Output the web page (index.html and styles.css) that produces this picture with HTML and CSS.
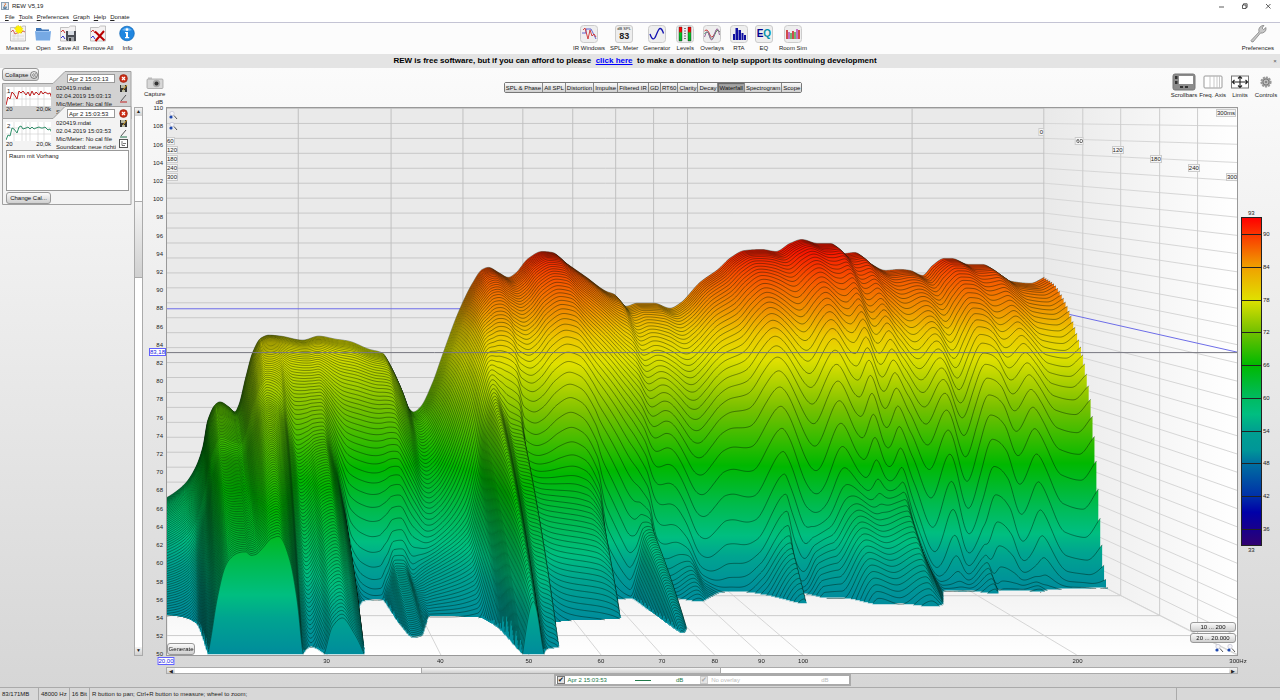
FILE: index.html
```
<!DOCTYPE html>
<html lang="en">
<head>
	<meta charset="utf-8">
	<title>REW V5,19</title>
	<link rel="stylesheet" href="styles.css">
</head>
<body>
	<div class="titlebar">
		<svg class="logo" viewBox="0 0 8 8"><rect x=".5" y=".5" width="7" height="7" fill="#dfe8f0" stroke="#8ba0b4"/><path d="M4 1.2q1.2 1-.2 2t0 1.2" fill="none" stroke="#e06a20"/><path d="M2 5.2h4M2.4 6.4h3" stroke="#4a7090"/></svg>
		<span class="name">REW V5,19</span>
		<svg class="winbtns" viewBox="0 0 56 10" fill="none" stroke="#333" stroke-width=".8"><path d="M2 6h5M49 3l4.500 4.500M53.500 3L49 7.500"/><path d="M25.500 4h3.500v3.500h-3.500zM26.500 4v-1.200h3.600v3.600h-1"/></svg>
	</div>
	<nav class="menu">
		<a href="#"><u>F</u>ile</a><a href="#"><u>T</u>ools</a><a href="#"><u>P</u>references</a><a href="#"><u>G</u>raph</a><a href="#"><u>H</u>elp</a><a href="#"><u>D</u>onate</a>
	</nav>

	<div class="toolbar">
		<div class="tools left">
			<button class="tool"><svg viewBox="0 0 18 18"><path d="M1.500 2.500h11l1-1.500h3v15h-15z" fill="#f4f2f2" stroke="#aaa" stroke-width=".7"/><path d="M3 11h12M3 14h12M5 8v7M9 8v7" stroke="#ccc" stroke-width=".6"/><path d="M2 7l2-2 2 4 2-1 3-1M12 8l2-2 2 1" fill="none" stroke="#c33" stroke-width=".8"/><path d="M9 0l1.200 1.600L12 1l.2 1.900 1.800.3-1 1.500 1.200 1.300-1.800.6-.2 1.800-1.700-.8-1.500 1.100-.7-1.700-1.900-.2.900-1.600L5.200 3.300l1.900-.4L7.200 1l1.500.6z" fill="#fff200" stroke="#e8cf00" stroke-width=".4"/></svg>Measure</button>
			<button class="tool"><svg viewBox="0 0 18 18"><path d="M2 4V3h5l1 1.500h7V7H2z" fill="#3f76b8"/><path d="M1 6h16l-1 9.500H2z" fill="#76a9e4"/><path d="M1.500 6.500h15" stroke="#9dc4f2"/></svg>Open</button>
			<button class="tool"><svg viewBox="0 0 18 18"><path d="M1.500 2.500h8l2-1.500h5v15h-15z" fill="#f4f2f2" stroke="#aaa" stroke-width=".7"/><path d="M2 7l2-2 2 3" fill="none" stroke="#c33"/><path d="M2 13l2-2 2 3" fill="none" stroke="#33c"/><path d="M7 6h10v10H8l-1-1z" fill="#4a4d54"/><path d="M9 6h6v4H9z" fill="#d8dde4"/><path d="M9 12h6v4H9z" fill="#9ca0a6"/><path d="M10 13h2v3h-2z" fill="#333"/></svg>Save All</button>
			<button class="tool"><svg viewBox="0 0 18 18"><path d="M1.500 2.500h8l2-1.500h5v15h-15z" fill="#f4f2f2" stroke="#aaa" stroke-width=".7"/><path d="M2 7l2-2 2 3" fill="none" stroke="#c33"/><path d="M2 13l2-2 2 3" fill="none" stroke="#33c"/><path d="M6 6.500l9.500 9M15 6L6.500 16" stroke="#b80000" stroke-width="2"/></svg>Remove All</button>
			<button class="tool"><svg viewBox="0 0 18 18"><circle cx="9" cy="8.500" r="7.300" fill="#1f86e0" stroke="#0e64b4" stroke-width=".7"/><path d="M4 5q5-5 10 0-5 2-10 0z" fill="#66b3f4"/><circle cx="9" cy="4.600" r="1.300" fill="#fff"/><path d="M7 7h3v5h1.200v1.200H7V12h1V8.200H7z" fill="#fff"/></svg>Info</button>
		</div>
		<div class="tools mid">
			<button class="tool"><svg viewBox="0 0 18 18"><rect class="ico" x=".5" y=".5" width="17" height="17" rx="3"/><path d="M2 8h4V4h5l5 10" fill="none" stroke="#4040c0" stroke-width=".8"/><path d="M3 5l2-2 3 11 2-9 2 6 2-2 2 3" fill="none" stroke="#d03030" stroke-width=".9"/></svg>IR Windows</button>
			<button class="tool"><span class="spl"><small>dB SPL</small><b>83</b></span>SPL Meter</button>
			<button class="tool"><svg viewBox="0 0 18 18"><rect class="ico" x=".5" y=".5" width="17" height="17" rx="3"/><path d="M2 9q3 9 6 1.500t4-7q2 0 3.500 5" fill="none" stroke="#1010b0" stroke-width="1.300"/></svg>Generator</button>
			<button class="tool"><svg viewBox="0 0 18 18"><defs><linearGradient id="lv" x1="0" y1="0" x2="0" y2="1"><stop offset="0" stop-color="#f00"/><stop offset=".3" stop-color="#f00"/><stop offset=".45" stop-color="#0c2"/><stop offset="1" stop-color="#0a2"/></linearGradient></defs><rect class="ico" x=".5" y=".5" width="17" height="17" rx="3"/><path fill="url(#lv)" stroke="#222" stroke-width=".4" d="M3 2h3v14H3zM12 2h3v14h-3z"/><path d="M9 3v12" stroke="#777" stroke-dasharray="1 1.500" stroke-width="2"/></svg>Levels</button>
			<button class="tool"><svg viewBox="0 0 18 18" fill="none"><rect class="ico" x=".5" y=".5" width="17" height="17" rx="3"/><path d="M1.500 6q3-3 5 3t5 0 5-2" stroke="#c33"/><path d="M1.500 9q3-5 5 2t5-1 5-3" stroke="#396"/><path d="M1.500 12q3-10 5-1t5-2 5 1" stroke="#969"/></svg>Overlays</button>
			<button class="tool"><svg viewBox="0 0 18 18"><rect class="ico" x=".5" y=".5" width="17" height="17" rx="3"/><path fill="#1010a0" d="M3 9h2v6H3zM5.500 3H8v12H5.500zM8.500 5H11v10H8.500zM11.500 8h2v7h-2zM14 10h2v5h-2z"/></svg>RTA</button>
			<button class="tool"><span class="eq"><b>E<i>Q</i></b></span>EQ</button>
			<button class="tool"><svg viewBox="0 0 18 18"><rect class="ico" x=".5" y=".5" width="17" height="17" rx="3"/><path d="M3 5v9M9 6v8M15 5v9" stroke="#c22" stroke-width="1.600"/><path d="M5 7v7M13 4v10" stroke="#a3a" stroke-width="1.300"/><path d="M7 8v6M11 7v7" stroke="#393" stroke-width="1.300"/></svg>Room Sim</button>
		</div>
		<div class="tools right">
			<button class="tool"><svg viewBox="0 0 18 18"><path d="M2 15.500l8-8.500q-1-3 1-5t4-1.500l-2 2.500 1.500 1.500L17 2.500q.5 3-1.500 4.500t-4 1L4 17q-2 0-2-1.500z" fill="#c8c8c8" stroke="#777" stroke-width=".7"/></svg>Preferences</button>
		</div>
	</div>

	<div class="banner">
		<p>REW is free software, but if you can afford to please &nbsp;<a href="#">click here</a>&nbsp; to make a donation to help support its continuing development</p>
		<button class="close">×</button>
	</div>

	<div class="main">
		<aside class="side">
			<button class="btn collapse">Collapse <svg viewBox="0 0 8 8" fill="none" stroke="#555" stroke-width=".7"><circle cx="4" cy="4" r="3.500"/><path d="M4 2.200L2.400 4 4 5.800M6 2.200L4.400 4 6 5.800"/></svg></button>

			<section class="card dim">
				<svg class="frame" viewBox="0 0 130 50" fill="#d2d2d2" stroke="#a0a0a0"><path d="M.5 48V12.500H51L63 .5h66V48z"/></svg>
				<div class="row">
					<div class="thumb">
						<svg viewBox="0 0 45 25" fill="none"><path class="grid" d="M8 0v19M16 0v19M20 0v19M24 0v19M32 0v19M38 0v19M0 6h45M0 12h45"/><path d="M0 18l2-8 2 2 2-7 2 2 3 5 2-8 2 2 2-2 3 4 2-3 2 4 2-5 2 4 2-3 3 3 2-4 2 3 2-2 3 2 2-1 2 6" stroke="#c02020" stroke-width="1"/></svg>
						<b>1</b><span class="lo">20</span><span class="hi">20,0k</span>
					</div>
					<div class="data">
						<input type="text" aria-label="Name" value="Apr 2 15:03:13">
						<p>020419.mdat</p><p>02.04.2019 15:03:13</p><p>Mic/Meter: No cal file</p><p>Soundcard: neue richtig</p>
					</div>
					<div class="acts">
						<button aria-label="Remove"><svg viewBox="0 0 9 9"><circle cx="4.500" cy="4.500" r="3.900" fill="#d03018" stroke="#8c1c0c" stroke-width=".6"/><path d="M3 3l3 3M6 3L3 6" stroke="#fff" stroke-width="1.200"/></svg></button>
						<button aria-label="Save"><svg viewBox="0 0 9 9"><path d="M1 1h7v7H1z" fill="#333"/><path d="M2 1h4v3H2zM3 6h3v2H3z" fill="#b9b9a0"/><path d="M4 6l4-5" stroke="#d8a020"/></svg></button>
						<button aria-label="Colour"><svg viewBox="0 0 9 9"><path d="M2 7l5-6" stroke="#555"/><path d="M1 8h7" stroke="#c02020"/></svg></button>
					</div>
				</div>
			</section>

			<section class="card front">
				<svg class="frame" viewBox="0 0 130 100" fill="#f3f3f3" stroke="#a0a0a0"><path d="M.5 98.500V12.500H51L63 .5h66v98z"/></svg>
				<div class="row">
					<div class="thumb">
						<svg viewBox="0 0 45 25" fill="none"><path class="grid" d="M8 0v19M16 0v19M20 0v19M24 0v19M32 0v19M38 0v19M0 6h45M0 12h45"/><path d="M0 18l2-5 2 1 2-8 2 1 3 4 2-6 2-1 2 3 3-1 2-1 2 2 2-2 2 2 2-1 3-1 2 1 2 0 2-1 3 3 2-1 2 4" stroke="#30906a" stroke-width="1"/></svg>
						<b>2</b><span class="lo">20</span><span class="hi">20,0k</span>
					</div>
					<div class="data">
						<input type="text" aria-label="Name" value="Apr 2 15:03:53">
						<p>020419.mdat</p><p>02.04.2019 15:03:53</p><p>Mic/Meter: No cal file</p><p>Soundcard: neue richtig</p>
					</div>
					<div class="acts">
						<button aria-label="Remove"><svg viewBox="0 0 9 9"><circle cx="4.500" cy="4.500" r="3.900" fill="#d03018" stroke="#8c1c0c" stroke-width=".6"/><path d="M3 3l3 3M6 3L3 6" stroke="#fff" stroke-width="1.200"/></svg></button>
						<button aria-label="Save"><svg viewBox="0 0 9 9"><path d="M1 1h7v7H1z" fill="#333"/><path d="M2 1h4v3H2zM3 6h3v2H3z" fill="#b9b9a0"/><path d="M4 6l4-5" stroke="#d8a020"/></svg></button>
						<button aria-label="Colour"><svg viewBox="0 0 9 9"><path d="M2 7l5-6" stroke="#555"/><path d="M1 8h7" stroke="#20704a"/></svg></button>
						<button aria-label="Notes"><svg viewBox="0 0 9 9" fill="none" stroke="#555"><rect x=".5" y=".5" width="8" height="8" fill="#fff"/><path d="M3 2v4.500h3M4 4.500h3" stroke-width=".8"/></svg></button>
					</div>
				</div>
				<textarea aria-label="Notes">Raum mit Vorhang</textarea>
				<button class="btn cal">Change Cal...</button>
			</section>
		</aside>
		<div class="vscroll"><i class="up"></i><i class="thumbv"></i><i class="down"></i></div>

		<div class="graph">
			<header class="ghead">
				<button class="tool capture"><svg viewBox="0 0 18 13"><rect x="1" y="2.500" width="16" height="9.500" rx="1" fill="#d8d8d8" stroke="#999" stroke-width=".7"/><path d="M2 2.500V1h4v1.500" fill="#bbb"/><circle cx="10.500" cy="7" r="3.700" fill="#aaa"/><circle cx="10.500" cy="7" r="2" fill="#333"/></svg>Capture</button>
				<div class="tabs">
					<button>SPL &amp; Phase</button><button>All SPL</button><button>Distortion</button><button>Impulse</button><button>Filtered IR</button><button>GD</button><button>RT60</button><button>Clarity</button><button>Decay</button><button class="on">Waterfall</button><button>Spectrogram</button><button>Scope</button>
				</div>
				<div class="gtools">
					<button class="tool"><svg viewBox="0 0 24 18"><rect x="1" y="1" width="22" height="16" rx="2" fill="#8c8c8c" stroke="#777"/><path d="M7 3h14v8H7z" fill="#fff"/><path d="M3 3h2.500v3H3zM3 8h2.500v3H3zM8 13h3v2H8zM13 13h3v2h-3z" fill="#333"/></svg>Scrollbars</button>
					<button class="tool"><svg viewBox="0 0 24 18"><rect x="3" y="3" width="18" height="12" rx="1" fill="#fff" stroke="#999"/><path d="M9 3v12M13 3v12M16 3v12M18.500 3v12" stroke="#bbb" stroke-width=".8"/></svg>Freq. Axis</button>
					<button class="tool"><svg viewBox="0 0 24 18"><rect x="3.500" y="3" width="17" height="12" fill="#fff" stroke="#777"/><path d="M4 9h16M12 3.500v11M6.500 7l-2 2 2 2M17.500 7l2 2-2 2M10 5.500l2-2 2 2M10 12.500l2 2 2-2" fill="none" stroke="#222" stroke-width="1.100"/></svg>Limits</button>
					<button class="tool"><svg viewBox="0 0 24 18"><circle cx="12" cy="9" r="4.600" fill="#aaa" stroke="#999" stroke-width="2" stroke-dasharray="2 1"/><circle cx="12" cy="9" r="3" fill="#bbb" stroke="#666" stroke-width=".7"/><circle cx="12" cy="9" r="1" fill="#777"/></svg>Controls</button>
				</div>
			</header>

			<div class="yaxis" id="yaxis"><span class="unit">dB</span><span class="mark">83,18</span></div>
			<div class="plot" id="plot">
				<canvas id="waterfall"></canvas>
				<div class="zooms tl">
					<svg viewBox="0 0 9 9"><circle cx="3" cy="2.500" r="2.200" fill="#f4f4f8" stroke="#bbc" stroke-width=".6"/><path d="M5 4.500L8 8" stroke="#555"/><circle cx="2" cy="6" r="1.600" fill="#1c48b0"/></svg>
					<svg viewBox="0 0 9 9"><circle cx="3" cy="2.500" r="2.200" fill="#f4f4f8" stroke="#bbc" stroke-width=".6"/><path d="M5 4.500L8 8" stroke="#555"/><circle cx="2" cy="6" r="1.600" fill="#1c48b0"/></svg>
				</div>
				<span class="tag ms">300ms</span>
				<button class="btn generate">Generate</button>
				<div class="ranges">
					<button class="btn">10 ... 200</button>
					<button class="btn">20 ... 20.000</button>
					<div class="zooms">
						<svg viewBox="0 0 9 9"><circle cx="3" cy="2.500" r="2.200" fill="#f4f4f8" stroke="#bbc" stroke-width=".6"/><path d="M5 4.500L8 8" stroke="#555"/><circle cx="2" cy="6" r="1.600" fill="#1c48b0"/></svg>
						<svg viewBox="0 0 9 9"><circle cx="3" cy="2.500" r="2.200" fill="#f4f4f8" stroke="#bbc" stroke-width=".6"/><path d="M5 4.500L8 8" stroke="#555"/><circle cx="2" cy="6" r="1.600" fill="#1c48b0"/></svg>
					</div>
				</div>
			</div>
			<div class="scale"><div class="bar" id="bar"><span class="top">93</span><span class="bot">33</span></div></div>

			<div class="xaxis" id="xaxis"><span class="mark">20,00</span></div>
			<div class="hscroll"><i class="lt"></i><i class="thumbh"></i><i class="rt"></i></div>
			<div class="legend">
				<label class="tr"><input type="checkbox" checked>Apr 2 15:03:53</label><i class="line"></i><span class="tr">dB</span>
				<label class="off"><input type="checkbox" checked disabled>No overlay</label><span class="off last">dB</span>
			</div>
		</div>
	</div>

	<footer class="status"><span>83/171MB</span><span>48000 Hz</span><span>16 Bit</span><span class="hint">R button to pan; Ctrl+R button to measure; wheel to zoom;</span><span class="end"></span></footer>

	<script src="waterfall.js"></script>
</body>
</html>
```
FILE: styles.css
```
*{
	box-sizing: border-box;
	margin: 0;
	padding: 0;
}
body{
	display: flex;
	flex-direction: column;
	min-height: 100vh;
	font: 6px/8px "Liberation Sans", Arial, sans-serif;
	color: #222;
	background: #fff;
}
button, input, textarea{
	font: inherit;
	color: inherit;
}
button{
	border: 0;
	background: none;
	white-space: nowrap;
}
svg{
	display: block;
}

/* title and menu */
.titlebar{
	display: flex;
	align-items: center;
	height: 12px;
	padding: 0 7px 0 1px;
}
.logo{
	width: 8px;
	height: 8px;
	margin-right: 3px;
}
.winbtns{
	width: 56px;
	height: 10px;
	margin-left: auto;
}
.menu{
	display: flex;
	gap: 4px;
	height: 11px;
	padding: 1px 5px;
	border-bottom: 1px solid #c4c4d4;
}
.menu a{
	color: inherit;
	text-decoration: none;
}

/* toolbar */
.toolbar{
	display: grid;
	grid-template-columns: 1fr auto 1fr;
	height: 31px;
	padding: 2px 6px 0;
	background: #fcfcfc;
}
.tools{
	display: flex;
	align-items: flex-start;
}
.tools.left{
	gap: 4px;
}
.tools.mid{
	gap: 5px;
	padding-left: 100px;
}
.tools.right{
	justify-content: flex-end;
}
.tool{
	display: flex;
	flex-direction: column;
	align-items: center;
	min-width: 20px;
}
.tools .tool svg, .spl, .eq{
	width: 18px;
	height: 18px;
	margin-bottom: 1px;
}
.ico{
	fill: #eee;
	stroke: #ccc;
}
.spl, .eq{
	display: block;
	border: 1px solid #ccc;
	border-radius: 3px;
	background: #eee;
}
.spl small{
	display: block;
	font-size: 4px;
	line-height: 6px;
}
.spl b{
	display: block;
	font-size: 9px;
	line-height: 9px;
}
.eq b{
	display: block;
	font-size: 10px;
	line-height: 16px;
	color: #000090;
}
.eq i{
	font-style: normal;
	color: #0090a8;
}
.banner{
	display: flex;
	align-items: center;
	height: 14px;
	background: #e4e4e4;
}
.banner p{
	flex: 1;
	font-size: 8px;
	line-height: 12px;
	font-weight: bold;
	text-align: center;
	color: #000;
}
.banner a{
	color: #00f;
}
.close{
	width: 10px;
	color: #555;
}

/* measurements panel */
.main{
	display: flex;
	flex: 1;
	background: linear-gradient(#fbfbfb, #d6d6d6);
}
.side{
	width: 134px;
	padding-left: 2px;
}
.btn{
	display: block;
	border: 1px solid #999;
	border-radius: 3px;
	background: linear-gradient(#fafafa, #cfcfcf);
	color: #111;
}
.collapse{
	position: relative;
	z-index: 1;
	display: flex;
	align-items: center;
	gap: 2px;
	width: 37px;
	height: 13px;
	padding: 0 2px;
}
.collapse svg{
	flex: 0 0 8px;
	height: 8px;
}
.card{
	position: relative;
	width: 130px;
}
.dim{
	height: 35px;
	margin-top: -10px;
}
.front{
	height: 100px;
}
.frame{
	position: absolute;
	inset: 0;
	width: 130px;
	height: auto;
}
.row{
	position: relative;
	display: flex;
	height: 44px;
}
.dim .row{
	height: 47px;
	overflow: hidden;
}
.thumb{
	position: relative;
	width: 45px;
	height: 25px;
	margin: 16px 5px 0 4px;
}
.thumb svg{
	width: 45px;
	height: 25px;
	background: linear-gradient(#fff 76%, transparent 76%);
}
.grid{
	stroke: #ccc;
	stroke-width: .6;
}
.thumb b, .thumb span{
	position: absolute;
	font-weight: normal;
}
.thumb b{
	left: 1px;
	top: 0;
	line-height: 8px;
}
.thumb .lo, .thumb .hi{
	bottom: -1px;
	line-height: 7px;
}
.thumb .lo{
	left: 0;
}
.thumb .hi{
	right: 0;
}
.data{
	width: 60px;
	padding-top: 3px;
	overflow: hidden;
	white-space: nowrap;
}
.data input{
	display: block;
	width: 48px;
	height: 9px;
	margin: 0 0 1px 11px;
	padding: 0 1px;
	border: 1px solid #999;
	background: #fff;
}
.data p{
	line-height: 8px;
}
.acts{
	padding: 3px 0 0 3px;
}
.acts button{
	display: block;
	margin-bottom: 1px;
}
.acts svg{
	width: 9px;
	height: 9px;
}
.front textarea{
	position: relative;
	display: block;
	width: 123px;
	height: 41px;
	margin-left: 4px;
	padding: 1px 2px;
	border: 1px solid #999;
	background: #fff;
	resize: none;
}
.cal{
	position: relative;
	width: 45px;
	height: 12px;
	margin: 1px 4px;
}

/* scroll bars */
.vscroll{
	display: flex;
	flex-direction: column;
	width: 9px;
	margin: 39px 0 31px;
	border: 1px solid #aaa;
	background: #fff;
}
.vscroll i, .hscroll i{
	background: linear-gradient(#f4f4f4, #d0d0d0);
}
.up, .down, .lt, .rt{
	flex: 0 0 8px;
	font-size: 5px;
	font-style: normal;
	line-height: 7px;
	text-align: center;
}
.up::before{
	content: "▲";
}
.down::before{
	content: "▼";
}
.lt::before{
	content: "◀";
}
.rt::before{
	content: "▶";
}
.thumbv{
	flex: 0 0 14%;
	margin: 85px 0 auto;
	border: 1px solid #aaa;
	border-width: 1px 0;
}
.hscroll{
	grid-column: 2;
	display: flex;
	height: 7px;
	margin-top: 1px;
	border: 1px solid #aaa;
	background: #fff;
}
.thumbh{
	flex: 0 0 28%;
	margin: 0 auto 0 23%;
	border: 1px solid #aaa;
	border-width: 0 1px;
}

/* graph */
.graph{
	display: grid;
	flex: 1;
	grid-template-columns: 23px 1fr 42px;
	grid-template-rows: 39px 1fr 10px 8px 13px;
	min-width: 0;
}
.ghead{
	grid-column: 1 / 4;
	display: grid;
	grid-template-columns: 1fr auto 1fr;
}
.capture{
	justify-self: start;
	margin: 8px 0 0 1px;
}
.capture svg{
	width: 18px;
	height: 14px;
}
.tabs{
	display: flex;
	align-self: start;
	height: 11px;
	margin: 14px 117px 0 0;
	border: 1px solid #777;
	border-radius: 2px;
}
.tabs button{
	padding: 0 1px;
	border-right: 1px solid #888;
	background: linear-gradient(#fafafa, #d0d0d0);
	color: #111;
}
.tabs button:last-child{
	border-right: 0;
}
.tabs .on{
	background: #a4a4a4;
	box-shadow: inset 1px 1px 1px #666;
}
.gtools{
	display: flex;
	justify-content: flex-end;
	gap: 2px;
	padding: 5px 2px 0 0;
}
.gtools svg{
	width: 24px;
	height: 18px;
}
.yaxis, .xaxis{
	position: relative;
}
.yaxis span{
	position: absolute;
	right: 3px;
	margin-top: -4px;
}
.yaxis .unit{
	top: -5px;
}
.mark{
	border: 1px solid #6060ff;
	color: #2020e0;
	background: #fff;
}
.yaxis .mark{
	top: 44.700%;
	right: 0;
	line-height: 6px;
}
.plot{
	position: relative;
	min-height: 200px;
	overflow: hidden;
	border: 1px solid #999;
	background: #fff;
}
.plot canvas{
	position: absolute;
	inset: 0;
	width: 100%;
	height: 100%;
}
.tag{
	position: absolute;
	border: 1px solid #ccc;
	background: #f6f6f6;
	line-height: 6px;
}
.plot .ms{
	top: 1px;
	right: 1px;
}
.tag.time{
	margin: -4px -1px 0 0;
	transform: translateX(-50%);
}
.tag.ltime{
	left: -1px;
	margin-top: -4px;
}
.zooms svg{
	width: 9px;
	height: 9px;
}
.zooms.tl{
	position: absolute;
	left: 2px;
	top: 3px;
	display: grid;
	gap: 2px;
}
.generate{
	position: absolute;
	left: 0;
	bottom: 0;
	width: 28px;
	height: 12px;
}
.ranges{
	position: absolute;
	right: 1px;
	bottom: 0;
	width: 46px;
}
.ranges .btn{
	width: 46px;
	height: 10px;
	margin-bottom: 1px;
	line-height: 8px;
}
.ranges .zooms{
	display: flex;
	justify-content: flex-end;
	gap: 3px;
	height: 11px;
}
.scale{
	position: relative;
}
.bar{
	position: absolute;
	left: 3px;
	top: 20%;
	width: 21px;
	height: 60%;
	border: 1px solid #222;
	background: linear-gradient(#f00, #f0a000 15%, #e0e000 25%, #70c000 35%, #00b900 45%, #00bb60 55%, #00be80 60%, #00a090 65%, #009698 71%, #0070a0 75%, #0030a8 85%, #0000a8 90%, #300070);
}
.bar span{
	position: absolute;
}
.bar .top{
	top: -9px;
	left: 6px;
}
.bar .bot{
	bottom: -9px;
	left: 6px;
}
.bar .tick{
	left: 0;
	width: 100%;
	margin-top: -4px;
	padding-left: 21px;
	background: linear-gradient(#222, #222) 0 4px / 19px 1px no-repeat;
}
.xaxis{
	grid-column: 2;
}
.xaxis span{
	position: absolute;
	top: 1px;
	transform: translateX(-50%);
}
.xaxis .mark{
	left: 0;
	line-height: 6px;
}
.legend{
	grid-column: 2;
	justify-self: center;
	display: flex;
	align-items: center;
	width: 297px;
	height: 12px;
	padding: 0 20px 0 1px;
	border: 2px solid #aaa;
	background: #fff;
}
.legend label{
	display: flex;
	align-items: center;
	gap: 3px;
}
.legend input{
	appearance: none;
	width: 8px;
	height: 8px;
	border: 1px solid #777;
	background: #e4e4e4;
}
.legend input::before{
	content: "✔";
	display: block;
	font-size: 7px;
	line-height: 6px;
	color: #111;
}
.legend input:disabled::before{
	color: #aaa;
}
.tr{
	color: #207848;
}
.line{
	width: 16px;
	height: 1px;
	margin: 0 25px 0 28px;
	background: #207848;
}
.legend .off{
	margin-left: 17px;
	color: #bbb;
}
.legend .off input{
	border-color: #ccc;
}
.legend .last{
	margin-left: auto;
}

/* status bar */
.status{
	display: flex;
	height: 13px;
	border-top: 1px solid #aaa;
	background: #d8d8d8;
	line-height: 13px;
}
.status span{
	padding: 0 2px;
	border-right: 1px solid #aaa;
	white-space: nowrap;
}
.status span:first-child{
	width: 39px;
}
.status .hint{
	flex: 1;
}
.status .end{
	width: 103px;
	border: 0;
}
```
FILE: waterfall.js
```
// plot area in drawing units
var X0 = 166, X1 = 1238, Y0 = 107, Y1 = 656;
var XB = 1045;          // right end of the back wall
var SLICES = 100;

// [x on back wall, y of first slice]
var top0 = [[166,498],[175,492],[185,483],[195,467],[202,447],[207,420],[215,404],[219,402],[228,407],[234,412],[238,405],[245,377],[252,352],[260,338],[268,335],[280,336],[302,340],[318,336],[335,339],[348,341],[368,349],[382,353],[388,362],[398,383],[408,408],[413,412],[420,407],[432,383],[442,355],[458,312],[472,283],[482,269],[488,267],[498,272],[508,277],[515,273],[528,258],[542,251],[552,252],[565,262],[585,276],[606,291],[614,294],[626,306],[637,303],[654,303],[670,308],[680,303],[700,282],[718,269],[731,257],[745,250],[762,249],[776,251],[790,243],[802,239],[818,243],[831,243],[845,253],[855,252],[869,262],[886,270],[900,269],[910,270],[923,275],[933,265],[945,258],[952,258],[969,264],[983,264],[997,272],[1012,281],[1031,283],[1045,277]];

// [x, tail level over 50 dB, time at which the tail reaches 50 dB]
var tail = [[166,8,.61],[175,9,.62],[183,11,.64],[192,14,.7],[200,16,1.02],[207,19,1.5],[214,20,1.96],[230,19,2.45],[245,24,2],[253,27,1.9],[259,28,1.85],[267,28,1.58],[273,28,1.26],[278,27,1],[286,25,.93],[295,25,1],[302,25,1.14],[310,25,1.19],[320,21,1.12],[328,15,1],[336,9,.58],[345,7,.46],[362,3,.42],[368,4,.7],[374,7,.84],[382,7,.82],[390,5,.72],[398,9,.62],[415,13,.62],[440,19,.63],[452,25,.74],[458,28,1],[467,31,1.23],[476,30,1],[482,29,.95],[492,29,.93],[498,28,.7],[520,29,.66],[550,28,.65],[564,23,.64],[573,8,.45],[590,5,.42],[598,8,.6],[606,12,.79],[614,13,.74],[622,7,.5],[632,9,.44],[650,12,.47],[665,6,.42],[690,4,.35],[718,15,.4],[744,17,.49],[752,5,.38],[770,18,.43],[785,22,.43],[810,24,.5],[830,22,.49],[855,22,.52],[866,14,.5],[874,10,.45],[890,6,.36],[912,6,.36],[932,14,.39],[942,5,.34],[960,5,.35],[976,7,.37],[990,4,.33],[1020,4,.33],[1045,3,.31]];

// [x, how much the direct part falls, its speed]
var fall = [[166,.9,.68],[230,.8,.68],[300,.9,.68],[350,1.1,.68],[385,.95,.68],[420,1.1,.68],[470,.85,.7],[500,1,.72],[545,.85,.74],[600,1,.78],[621,1.15,.8],[640,1,.84],[663,1.2,.86],[690,1,.89],[716,1.05,.91],[745,.85,.93],[778,1.22,.94],[800,.95,.95],[822,1.2,.95],[833,.97,.96],[847,1.18,.96],[858,1,.96],[870,1.1,.96],[887,1.24,.97],[905,.98,.97],[923,1.3,.97],[945,.92,.98],[958,.97,.98],[971,1.14,.98],[988,.92,.99],[1012,1.06,1],[1030,1.08,1],[1045,1,1]];

// level drop of the direct part over time
var gate = [[0,0],[.05,.6],[.11,2.7],[.16,5.7],[.197,8.7],[.233,13.2],[.26,19],[.31,38],[.36,60],[1.5,200]];

// monotone cubic through the points
function curve(pts, k){
	var n = pts.length, d = [], m = [];
	for(var i=0;i<n-1;i++){
		d[i] = (pts[i+1][k]-pts[i][k])/(pts[i+1][0]-pts[i][0]);
	}
	m[0] = d[0];
	m[n-1] = d[n-2];
	for(i=1;i<n-1;i++){
		m[i] = d[i-1]*d[i]<=0 ? 0 : 2*d[i-1]*d[i]/(d[i-1]+d[i]);
	}
	return function(x){
		var i = 0;
		while(i<n-2 && x>pts[i+1][0]) i++;
		var h = pts[i+1][0]-pts[i][0], t = (x-pts[i][0])/h, t2 = t*t, t3 = t2*t;
		return (2*t3-3*t2+1)*pts[i][k]+(t3-2*t2+t)*h*m[i]+(3*t2-2*t3)*pts[i+1][k]+(t3-t2)*h*m[i+1];
	};
}

// level and time to screen
function sy(db, t){
	return 308+44*t+(83.18-db)*(7.5+1.64*t);
}
function sx(x, t){
	return X0+(x-X0)*(1+.2196*t);
}
function mix(a, b){
	return 10*Math.log10(Math.pow(10,a/10)+Math.pow(10,b/10));
}

var colors = [[96,"#e00000"],[91,"#f81400"],[88,"#f85000"],[84,"#f09000"],[81,"#ecc800"],[78,"#e0e000"],[72,"#78c000"],[65,"#00b800"],[60,"#00bb50"],[56.5,"#00be80"],[54,"#00a490"],[50,"#008c9c"]];
var freqs = [20,30,40,50,60,70,80,90,100,200,300];
function fpos(f){
	return Math.log(f/20)/Math.log(15);
}

function line(c, x1, y1, x2, y2){
	c.beginPath();
	c.moveTo(x1,y1);
	c.lineTo(x2,y2);
	c.stroke();
}
function area(c, fill, pts){
	c.fillStyle = fill;
	c.beginPath();
	pts.forEach(function(p){ c.lineTo(p[0],p[1]); });
	c.fill();
}

function drawRoom(c){
	var g;
	area(c, "#eaeaea", [[X0,Y0],[XB,Y0],[XB,557],[X0,557]]);
	g = c.createLinearGradient(XB,0,X1,0);
	g.addColorStop(0,"#e9e9e9");
	g.addColorStop(1,"#ffffff");
	area(c, g, [[XB,Y0],[X1,Y0],[X1,Y1],[XB,557]]);
	g = c.createLinearGradient(0,557,0,Y1);
	g.addColorStop(0,"#ececec");
	g.addColorStop(1,"#ffffff");
	area(c, g, [[X0,557],[XB,557],[X1,Y1],[X0,Y1]]);

	c.lineWidth = 1;
	for(var db=50;db<=110;db+=2){
		var y = Math.round(sy(db,0))+.5;
		c.strokeStyle = "#c8c8c8";
		line(c, X0, y, XB, y);
		c.strokeStyle = "#d6d6d6";
		line(c, XB, y, X1, sy(db,1));
	}
	freqs.forEach(function(f){
		var x = Math.round(X0+(XB-X0)*fpos(f))-.5;
		c.strokeStyle = "#c0c0c0";
		line(c, x, Y0, x, 557);
		c.strokeStyle = "#d6d6d6";
		line(c, x, 557, X0+(X1-X0)*fpos(f), Y1);
	});
	for(var i=1;i<5;i++){
		var x = Math.round(XB+(X1-XB)*i/5)-.5, fy = Math.round(sy(50,i/5))+.5;
		c.strokeStyle = "#cccccc";
		line(c, x, Y0, x, fy);
		line(c, X0, fy, x, fy);
	}
	c.strokeStyle = "#6c6ce8";
	line(c, X0, 308.5, XB, 308.5);
	line(c, XB, 308.5, X1, 352);
}

function drawSlices(c){
	var ft = curve(top0,1), fa = curve(tail,1), fT = curve(tail,2), ff = curve(fall,1), fs = curve(fall,2), fg = curve(gate,1);
	var cols = [];
	for(var x=X0;x<=XB;x++){
		var lv = 83.18-(ft(x)-308)/7.5, end = fT(x);
		if(end>1) end = Math.pow(end,2/3);
		cols.push([x, lv, Math.min(fa(x),lv-50.5), end, ff(x), fs(x)]);
	}
	for(var s=0;s<=SLICES;s++){
		var t = s/SLICES, floor = sy(50,t), pts = [];
		cols.forEach(function(k){
			var a = k[1]-fg(t*k[5])*k[4];
			var b = 50+k[2]*(1-Math.pow(t/k[3],1.5));
			var over = mix(k[1],50+k[2])-k[1];
			var db = mix(a,b)-over*Math.max(0,1-t*3);
			pts.push([sx(k[0],t), Math.min(sy(db,t),floor), db>50]);
		});
		var g = c.createLinearGradient(0,sy(96,t),0,floor);
		colors.forEach(function(k){ g.addColorStop((96-k[0])/46,k[1]); });
		area(c, g, [[X0,floor]].concat(pts,[[sx(XB,t),floor]]));

		c.strokeStyle = "rgba(0,20,10,.55)";
		c.lineWidth = .8;
		c.beginPath();
		for(var i=1;i<pts.length;i++){
			if(pts[i][2] && pts[i-1][2]){
				c.moveTo(pts[i-1][0],pts[i-1][1]);
				c.lineTo(pts[i][0],pts[i][1]);
			}
		}
		c.stroke();
	}
}

function draw(){
	var cv = document.getElementById("waterfall");
	var w = cv.clientWidth, h = cv.clientHeight;
	cv.width = w;
	cv.height = h;
	var c = cv.getContext("2d");
	c.scale(w/(X1-X0), h/(Y1-Y0));
	c.translate(-X0,-Y0);
	drawRoom(c);
	drawSlices(c);
	c.strokeStyle = "#77777f";
	c.lineWidth = 1;
	line(c, X0, 352.5, X1, 352.5);
}

function label(parent, cls, text, prop, pct, top){
	var el = document.createElement("span");
	el.className = cls;
	el.textContent = text;
	el.style[prop] = pct+"%";
	if(top !== undefined) el.style.top = top+"%";
	document.getElementById(parent).appendChild(el);
}

for(var d=110;d>=50;d-=2){
	label("yaxis", "", d, "top", (110-d)/60*99.5+.2);
}
freqs.slice(1).forEach(function(f){
	label("xaxis", "", f==300 ? "300Hz" : f, "left", fpos(f)*100);
});
for(d=90;d>=36;d-=6){
	label("bar", "tick", d, "top", (93-d)/60*100);
}
for(var i=0;i<=5;i++){
	var ty = (24+i*9)/549*100;
	label("plot", "tag time", i*60, "left", (XB-X0-3+i*38.2)/(X1-X0)*100, ty);
	if(i>0) label("plot", "tag ltime", i*60, "top", ty);
}

window.onresize = draw;
draw();
```
